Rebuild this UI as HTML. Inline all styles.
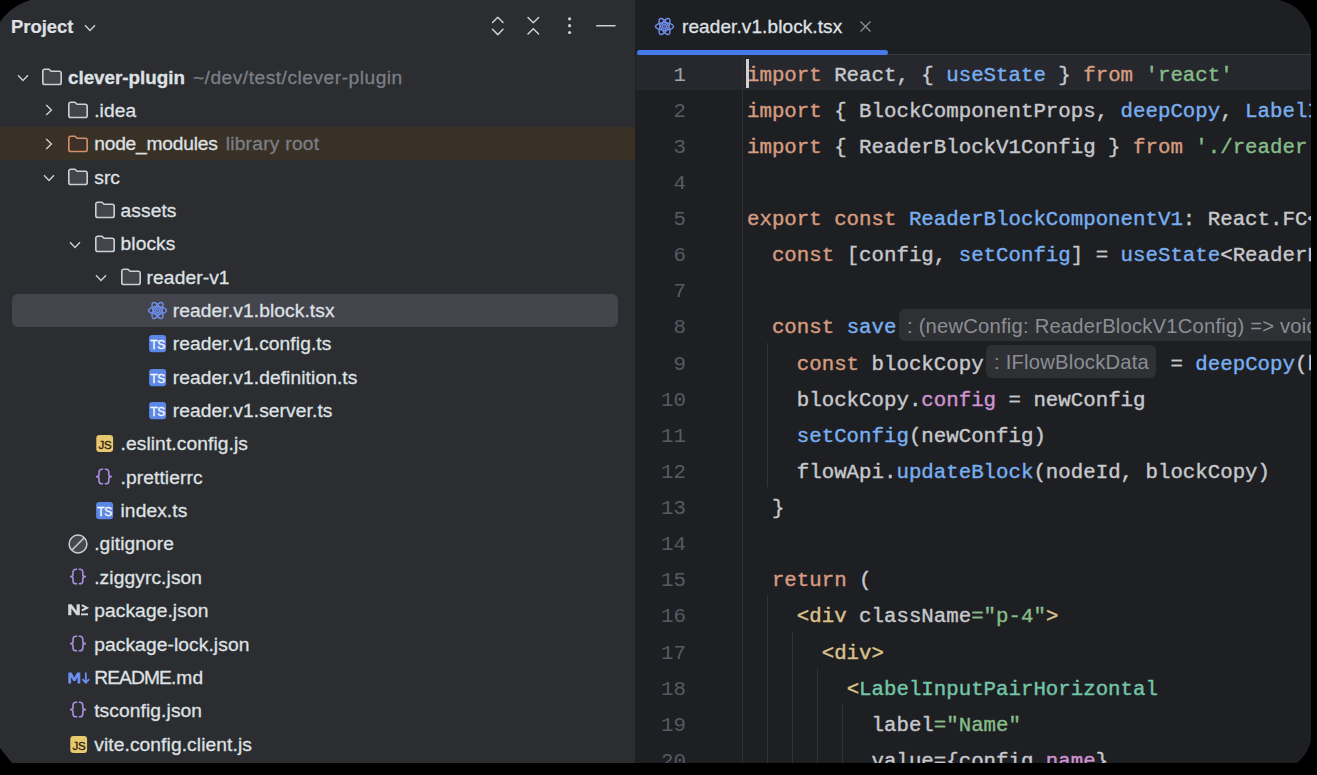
<!DOCTYPE html>
<html><head><meta charset="utf-8"><style>
*{margin:0;padding:0;box-sizing:border-box}
html,body{width:1317px;height:775px;overflow:hidden;background:#000}
#win{position:absolute;left:0;top:0;width:1311px;height:763px;overflow:hidden;background:#1E1F22}
#proj{position:absolute;left:0;top:0;width:635px;height:763px;background:#2B2D30}
#sep{position:absolute;left:635px;top:0;width:1px;height:763px;background:#1E1F22}
#ed{position:absolute;left:636px;top:0;width:675px;height:763px;background:#1E1F22;overflow:hidden}
.ic{position:absolute;line-height:0}
.ic svg{display:block}
.tn{position:absolute;font-family:"Liberation Sans",sans-serif;font-size:19.2px;line-height:33px;color:#DFE1E5;white-space:pre;letter-spacing:0.1px;-webkit-text-stroke:0.3px currentColor}
.tn.b{font-weight:700;letter-spacing:0;font-size:18.8px}
.gr{color:#7B7F86;font-weight:400;letter-spacing:0.5px;margin-left:8px;font-size:19.2px}
.hdr{position:absolute;left:11px;top:10px;font-family:"Liberation Sans",sans-serif;font-weight:700;font-size:18.4px;line-height:33px;color:#DFE1E5;-webkit-text-stroke:0.2px currentColor}
.ln{position:absolute;left:0;width:686px;text-align:right;font-family:"Liberation Mono",monospace;font-size:20.75px;line-height:36px;color:#575A61;white-space:pre}
.ln.cur{color:#A1A3AB}
.cl{position:absolute;left:747px;font-family:"Liberation Mono",monospace;font-size:20.75px;line-height:36px;color:#BCBEC4;white-space:pre;-webkit-text-stroke:0.4px currentColor}
.guide{position:absolute;width:1px;background:#313337}
.inlay{position:absolute;background:#2F3034;border-radius:6px;font-family:"Liberation Sans",sans-serif;font-size:20.2px;line-height:33px;color:#8B8E94;letter-spacing:0.22px;white-space:pre}
</style></head><body>
<div id="win">
<div id="proj">
<div class="hdr">Project</div>
<div class="ic" style="left:84px;top:24px"><svg width="12" height="8" viewBox="0 0 12 8"><path d="M1 1.2 L6 6.4 L11 1.2" fill="none" stroke="#CED0D6" stroke-width="1.4"/></svg></div>
<svg style="position:absolute;left:488px;top:14px" width="140" height="24" viewBox="0 0 140 24">
<g fill="none" stroke="#CED0D6" stroke-width="1.5" stroke-linecap="round" stroke-linejoin="round">
<path d="M4.5 8.5 L9.8 3.2 L15 8.5 M4.5 15.3 L9.8 20.6 L15 15.3"/>
<path d="M40 3.5 L45.3 8.8 L50.6 3.5 M40 20 L45.3 14.8 L50.6 20"/>
<path d="M108.7 11.7 H127"/>
</g>
<g fill="#CED0D6"><circle cx="81.6" cy="4.8" r="1.6"/><circle cx="81.6" cy="11.7" r="1.6"/><circle cx="81.6" cy="18.5" r="1.6"/></g>
</svg>
<div style="position:absolute;left:0;top:126.5px;width:635px;height:33.3px;background:#3A3126"></div>
<div style="position:absolute;left:12px;top:294px;width:606px;height:33px;background:#44454C;border-radius:6px"></div>
<div class="ic" style="left:16.5px;top:73.8px"><svg width="12" height="8" viewBox="0 0 12 8"><path d="M1 1.2 L6 6.4 L11 1.2" fill="none" stroke="#CED0D6" stroke-width="1.4"/></svg></div><div class="ic" style="left:41.0px;top:68.0px"><svg width="22" height="18" viewBox="0 0 22 18"><path d="M1.8 3.3 Q1.8 1.2 3.9 1.2 H8 L10.1 3.3 H18.1 Q20.2 3.3 20.2 5.4 V14.4 Q20.2 16.5 18.1 16.5 H3.9 Q1.8 16.5 1.8 14.4 Z" fill="#43454A" stroke="#CED0D6" stroke-width="1.6" stroke-linejoin="round"/></svg></div><div class="tn b" style="left:68.0px;top:60.5px">clever-plugin<span class="gr">~/dev/test/clever-plugin</span></div><div class="ic" style="left:44.6px;top:104.3px"><svg width="8" height="12" viewBox="0 0 8 12"><path d="M1.2 1 L6.4 6 L1.2 11" fill="none" stroke="#CED0D6" stroke-width="1.4"/></svg></div><div class="ic" style="left:67.2px;top:101.3px"><svg width="22" height="18" viewBox="0 0 22 18"><path d="M1.8 3.3 Q1.8 1.2 3.9 1.2 H8 L10.1 3.3 H18.1 Q20.2 3.3 20.2 5.4 V14.4 Q20.2 16.5 18.1 16.5 H3.9 Q1.8 16.5 1.8 14.4 Z" fill="#43454A" stroke="#CED0D6" stroke-width="1.6" stroke-linejoin="round"/></svg></div><div class="tn" style="left:94.2px;top:93.8px">.idea</div><div class="ic" style="left:44.6px;top:137.7px"><svg width="8" height="12" viewBox="0 0 8 12"><path d="M1.2 1 L6.4 6 L1.2 11" fill="none" stroke="#CED0D6" stroke-width="1.4"/></svg></div><div class="ic" style="left:67.2px;top:134.7px"><svg width="22" height="18" viewBox="0 0 22 18"><path d="M1.8 3.3 Q1.8 1.2 3.9 1.2 H8 L10.1 3.3 H18.1 Q20.2 3.3 20.2 5.4 V14.4 Q20.2 16.5 18.1 16.5 H3.9 Q1.8 16.5 1.8 14.4 Z" fill="#3E3129" stroke="#D38F6A" stroke-width="1.6" stroke-linejoin="round"/></svg></div><div class="tn" style="left:94.2px;top:127.2px"><span style="letter-spacing:-0.2px">node_modules</span><span class="gr"><span style="letter-spacing:0.25px">library root</span></span></div><div class="ic" style="left:42.7px;top:173.9px"><svg width="12" height="8" viewBox="0 0 12 8"><path d="M1 1.2 L6 6.4 L11 1.2" fill="none" stroke="#CED0D6" stroke-width="1.4"/></svg></div><div class="ic" style="left:67.2px;top:168.1px"><svg width="22" height="18" viewBox="0 0 22 18"><path d="M1.8 3.3 Q1.8 1.2 3.9 1.2 H8 L10.1 3.3 H18.1 Q20.2 3.3 20.2 5.4 V14.4 Q20.2 16.5 18.1 16.5 H3.9 Q1.8 16.5 1.8 14.4 Z" fill="#43454A" stroke="#CED0D6" stroke-width="1.6" stroke-linejoin="round"/></svg></div><div class="tn" style="left:94.2px;top:160.6px">src</div><div class="ic" style="left:93.5px;top:201.4px"><svg width="22" height="18" viewBox="0 0 22 18"><path d="M1.8 3.3 Q1.8 1.2 3.9 1.2 H8 L10.1 3.3 H18.1 Q20.2 3.3 20.2 5.4 V14.4 Q20.2 16.5 18.1 16.5 H3.9 Q1.8 16.5 1.8 14.4 Z" fill="#43454A" stroke="#CED0D6" stroke-width="1.6" stroke-linejoin="round"/></svg></div><div class="tn" style="left:120.5px;top:193.9px">assets</div><div class="ic" style="left:69.0px;top:240.6px"><svg width="12" height="8" viewBox="0 0 12 8"><path d="M1 1.2 L6 6.4 L11 1.2" fill="none" stroke="#CED0D6" stroke-width="1.4"/></svg></div><div class="ic" style="left:93.5px;top:234.8px"><svg width="22" height="18" viewBox="0 0 22 18"><path d="M1.8 3.3 Q1.8 1.2 3.9 1.2 H8 L10.1 3.3 H18.1 Q20.2 3.3 20.2 5.4 V14.4 Q20.2 16.5 18.1 16.5 H3.9 Q1.8 16.5 1.8 14.4 Z" fill="#43454A" stroke="#CED0D6" stroke-width="1.6" stroke-linejoin="round"/></svg></div><div class="tn" style="left:120.5px;top:227.2px">blocks</div><div class="ic" style="left:95.1px;top:273.9px"><svg width="12" height="8" viewBox="0 0 12 8"><path d="M1 1.2 L6 6.4 L11 1.2" fill="none" stroke="#CED0D6" stroke-width="1.4"/></svg></div><div class="ic" style="left:119.6px;top:268.1px"><svg width="22" height="18" viewBox="0 0 22 18"><path d="M1.8 3.3 Q1.8 1.2 3.9 1.2 H8 L10.1 3.3 H18.1 Q20.2 3.3 20.2 5.4 V14.4 Q20.2 16.5 18.1 16.5 H3.9 Q1.8 16.5 1.8 14.4 Z" fill="#43454A" stroke="#CED0D6" stroke-width="1.6" stroke-linejoin="round"/></svg></div><div class="tn" style="left:146.6px;top:260.6px">reader-v1</div><div class="ic" style="left:146.8px;top:301.0px"><svg width="21" height="19" viewBox="0 0 21 19"><g fill="none" stroke="#6F8EEA" stroke-width="1.45"><ellipse cx="10.5" cy="9.5" rx="9.0" ry="3.7"/><ellipse cx="10.5" cy="9.5" rx="9.0" ry="3.7" transform="rotate(60 10.5 9.5)"/><ellipse cx="10.5" cy="9.5" rx="9.0" ry="3.7" transform="rotate(120 10.5 9.5)"/><circle cx="10.5" cy="9.5" r="2.0" stroke-width="1.3"/></g><circle cx="10.5" cy="9.5" r="0.8" fill="#6F8EEA"/></svg></div><div class="tn" style="left:172.8px;top:294.0px">reader.v1.block.tsx</div><div class="ic" style="left:148.7px;top:335.3px"><svg width="18" height="18" viewBox="0 0 18 18"><rect x="0.1" y="0.1" width="17" height="17.1" rx="3.2" fill="#5C87E6"/><text x="15.9" y="13.9" text-anchor="end" font-family="Liberation Sans" font-weight="400" font-size="12" fill="#F6F8FD" stroke="#F6F8FD" stroke-width="0.35" letter-spacing="-0.3">TS</text></svg></div><div class="tn" style="left:172.8px;top:327.3px">reader.v1.config.ts</div><div class="ic" style="left:148.7px;top:368.7px"><svg width="18" height="18" viewBox="0 0 18 18"><rect x="0.1" y="0.1" width="17" height="17.1" rx="3.2" fill="#5C87E6"/><text x="15.9" y="13.9" text-anchor="end" font-family="Liberation Sans" font-weight="400" font-size="12" fill="#F6F8FD" stroke="#F6F8FD" stroke-width="0.35" letter-spacing="-0.3">TS</text></svg></div><div class="tn" style="left:172.8px;top:360.7px">reader.v1.definition.ts</div><div class="ic" style="left:148.7px;top:402.0px"><svg width="18" height="18" viewBox="0 0 18 18"><rect x="0.1" y="0.1" width="17" height="17.1" rx="3.2" fill="#5C87E6"/><text x="15.9" y="13.9" text-anchor="end" font-family="Liberation Sans" font-weight="400" font-size="12" fill="#F6F8FD" stroke="#F6F8FD" stroke-width="0.35" letter-spacing="-0.3">TS</text></svg></div><div class="tn" style="left:172.8px;top:394.0px">reader.v1.server.ts</div><div class="ic" style="left:96.1px;top:435.4px"><svg width="18" height="18" viewBox="0 0 18 18"><rect x="0.3" y="0.1" width="16.8" height="16.9" rx="3.2" fill="#E8C86E"/><text x="15.7" y="13.7" text-anchor="end" font-family="Liberation Sans" font-weight="400" font-size="11.5" fill="#2A2410" stroke="#2A2410" stroke-width="0.35" letter-spacing="-0.1">JS</text></svg></div><div class="tn" style="left:120.5px;top:427.4px">.eslint.config.js</div><div class="ic" style="left:95.4px;top:467.9px"><svg width="18" height="18" viewBox="0 0 18 18"><path d="M8.2 1.3 H7.1 Q4 1.3 4 4.3 V6.7 Q4 8.65 1.1 8.65 Q4 8.65 4 10.6 V12.9 Q4 15.8 7.1 15.8 H8.2 M9.7 1.3 H10.8 Q13.8 1.3 13.8 4.3 V6.7 Q13.8 8.65 16.9 8.65 Q13.8 8.65 13.8 10.6 V12.9 Q13.8 15.8 10.8 15.8 H9.7" fill="none" stroke="#A88EE0" stroke-width="1.6"/></svg></div><div class="tn" style="left:120.5px;top:460.7px">.prettierrc</div><div class="ic" style="left:96.4px;top:502.1px"><svg width="18" height="18" viewBox="0 0 18 18"><rect x="0.1" y="0.1" width="17" height="17.1" rx="3.2" fill="#5C87E6"/><text x="15.9" y="13.9" text-anchor="end" font-family="Liberation Sans" font-weight="400" font-size="12" fill="#F6F8FD" stroke="#F6F8FD" stroke-width="0.35" letter-spacing="-0.3">TS</text></svg></div><div class="tn" style="left:120.5px;top:494.1px">index.ts</div><div class="ic" style="left:67.7px;top:533.9px"><svg width="20" height="20" viewBox="0 0 20 20"><circle cx="10" cy="10" r="8.9" fill="#46484D" stroke="#CED0D6" stroke-width="1.5"/><path d="M3.8 16.2 L16.2 3.8" stroke="#CED0D6" stroke-width="1.5"/></svg></div><div class="tn" style="left:94.2px;top:527.4px">.gitignore</div><div class="ic" style="left:69.1px;top:568.0px"><svg width="18" height="18" viewBox="0 0 18 18"><path d="M8.2 1.3 H7.1 Q4 1.3 4 4.3 V6.7 Q4 8.65 1.1 8.65 Q4 8.65 4 10.6 V12.9 Q4 15.8 7.1 15.8 H8.2 M9.7 1.3 H10.8 Q13.8 1.3 13.8 4.3 V6.7 Q13.8 8.65 16.9 8.65 Q13.8 8.65 13.8 10.6 V12.9 Q13.8 15.8 10.8 15.8 H9.7" fill="none" stroke="#A88EE0" stroke-width="1.6"/></svg></div><div class="tn" style="left:94.2px;top:560.8px">.ziggyrc.json</div><div class="ic" style="left:68.2px;top:604.0px"><svg width="21" height="12" viewBox="0 0 21 12"><path d="M0.2 11.3 V0.2 H3.6 L8.6 7 V0.2 H11.8 V11.3 H8.5 L3.4 4.4 V11.3 Z" fill="#D5D6DA"/><path d="M13.8 1.1 L19 3.8 L13.8 6.5" fill="none" stroke="#D5D6DA" stroke-width="2"/><rect x="13" y="9.4" width="7" height="1.9" fill="#D5D6DA"/></svg></div><div class="tn" style="left:94.2px;top:594.1px">package.json</div><div class="ic" style="left:69.1px;top:634.7px"><svg width="18" height="18" viewBox="0 0 18 18"><path d="M8.2 1.3 H7.1 Q4 1.3 4 4.3 V6.7 Q4 8.65 1.1 8.65 Q4 8.65 4 10.6 V12.9 Q4 15.8 7.1 15.8 H8.2 M9.7 1.3 H10.8 Q13.8 1.3 13.8 4.3 V6.7 Q13.8 8.65 16.9 8.65 Q13.8 8.65 13.8 10.6 V12.9 Q13.8 15.8 10.8 15.8 H9.7" fill="none" stroke="#A88EE0" stroke-width="1.6"/></svg></div><div class="tn" style="left:94.2px;top:627.5px">package-lock.json</div><div class="ic" style="left:67.7px;top:671.6px"><svg width="22" height="12" viewBox="0 0 22 12"><path d="M0.3 11.6 V0.6 H3.6 L6.3 5.4 L9 0.6 H12.3 V11.6 H9.5 V5.2 L7.3 9 H5.3 L3.1 5.2 V11.6 Z" fill="#6C8EF0"/><path d="M17.8 0.6 V10.8 M14.4 7.2 L17.8 10.8 L21.2 7.2" fill="none" stroke="#6C8EF0" stroke-width="1.8"/></svg></div><div class="tn" style="left:94.2px;top:660.8px"><span style="letter-spacing:-0.9px">README</span>.md</div><div class="ic" style="left:69.1px;top:701.4px"><svg width="18" height="18" viewBox="0 0 18 18"><path d="M8.2 1.3 H7.1 Q4 1.3 4 4.3 V6.7 Q4 8.65 1.1 8.65 Q4 8.65 4 10.6 V12.9 Q4 15.8 7.1 15.8 H8.2 M9.7 1.3 H10.8 Q13.8 1.3 13.8 4.3 V6.7 Q13.8 8.65 16.9 8.65 Q13.8 8.65 13.8 10.6 V12.9 Q13.8 15.8 10.8 15.8 H9.7" fill="none" stroke="#A88EE0" stroke-width="1.6"/></svg></div><div class="tn" style="left:94.2px;top:694.1px">tsconfig.json</div><div class="ic" style="left:69.8px;top:735.5px"><svg width="18" height="18" viewBox="0 0 18 18"><rect x="0.3" y="0.1" width="16.8" height="16.9" rx="3.2" fill="#E8C86E"/><text x="15.7" y="13.7" text-anchor="end" font-family="Liberation Sans" font-weight="400" font-size="11.5" fill="#2A2410" stroke="#2A2410" stroke-width="0.35" letter-spacing="-0.1">JS</text></svg></div><div class="tn" style="left:94.2px;top:727.5px">vite.config.client.js</div>
</div>
<div id="sep"></div>
<div id="edwrap" style="position:absolute;left:0;top:0;width:1311px;height:763px">
<div style="position:absolute;left:636px;top:55px;width:675px;height:35px;background:#26282E"></div>
<div style="position:absolute;left:636px;top:54px;width:675px;height:1px;background:#393B40"></div>
<div style="position:absolute;left:742px;top:55px;width:1px;height:708px;background:#2E3034"></div>
<div class="guide" style="left:766.8px;top:343px;height:144px"></div><div class="guide" style="left:766.8px;top:596px;height:217px"></div><div class="guide" style="left:791.8px;top:632px;height:181px"></div><div class="guide" style="left:816.8px;top:668px;height:144px"></div><div class="guide" style="left:841.8px;top:704px;height:108px"></div>
<div style="position:absolute;left:637px;top:49.5px;width:251px;height:5.3px;background:#4679EA;border-radius:3px"></div>
<div class="ic" style="left:653.5px;top:16.5px"><svg width="21" height="19" viewBox="0 0 21 19"><g fill="none" stroke="#6F8EEA" stroke-width="1.45"><ellipse cx="10.5" cy="9.5" rx="9.0" ry="3.7"/><ellipse cx="10.5" cy="9.5" rx="9.0" ry="3.7" transform="rotate(60 10.5 9.5)"/><ellipse cx="10.5" cy="9.5" rx="9.0" ry="3.7" transform="rotate(120 10.5 9.5)"/><circle cx="10.5" cy="9.5" r="2.0" stroke-width="1.3"/></g><circle cx="10.5" cy="9.5" r="0.8" fill="#6F8EEA"/></svg></div>
<div class="tn" style="left:682px;top:10px;font-size:19px">reader.v1.block.tsx</div>
<svg style="position:absolute;left:859px;top:20px" width="13" height="13" viewBox="0 0 13 13"><path d="M1.5 1.5 L11.5 11.5 M11.5 1.5 L1.5 11.5" stroke="#8C8F94" stroke-width="1.3"/></svg>
<div class="ln cur" style="top:57.6px">1</div><div class="cl" style="top:57.6px"><span style="color:#D69C80">import</span><span style="color:#C6C8CD"> React, { </span><span style="color:#78AEF0">useState</span><span style="color:#C6C8CD"> } </span><span style="color:#D69C80">from</span> <span style="color:#86BC89">'react'</span></div><div class="ln" style="top:93.7px">2</div><div class="cl" style="top:93.7px"><span style="color:#D69C80">import</span><span style="color:#C6C8CD"> { BlockComponentProps, </span><span style="color:#78AEF0">deepCopy</span><span style="color:#C6C8CD">, </span><span style="color:#78AEF0">LabelInputPairHorizontal</span></div><div class="ln" style="top:129.8px">3</div><div class="cl" style="top:129.8px"><span style="color:#D69C80">import</span><span style="color:#C6C8CD"> { ReaderBlockV1Config } </span><span style="color:#D69C80">from</span> <span style="color:#86BC89">'./reader.v1.config'</span></div><div class="ln" style="top:166.0px">4</div><div class="ln" style="top:202.1px">5</div><div class="cl" style="top:202.1px"><span style="color:#D69C80">export const </span><span style="color:#78AEF0">ReaderBlockComponentV1</span><span style="color:#C6C8CD">: React.FC&lt;BlockComponentProps&gt;</span></div><div class="ln" style="top:238.2px">6</div><div class="cl" style="top:238.2px"><span style="color:#C6C8CD">  </span><span style="color:#D69C80">const </span><span style="color:#C6C8CD">[config, </span><span style="color:#78AEF0">setConfig</span><span style="color:#C6C8CD">] = </span><span style="color:#78AEF0">useState</span><span style="color:#C6C8CD">&lt;ReaderBlockV1Config&gt;</span></div><div class="ln" style="top:274.3px">7</div><div class="ln" style="top:310.4px">8</div><div class="cl" style="top:310.4px"><span style="color:#C6C8CD">  </span><span style="color:#D69C80">const </span><span style="color:#78AEF0">save</span></div><div class="ln" style="top:346.6px">9</div><div class="cl" style="top:346.6px"><span style="color:#C6C8CD">    </span><span style="color:#D69C80">const </span><span style="color:#C6C8CD">blockCopy</span></div><div class="ln" style="top:382.7px">10</div><div class="cl" style="top:382.7px"><span style="color:#C6C8CD">    blockCopy.</span><span style="color:#CF94D2">config</span><span style="color:#C6C8CD"> = newConfig</span></div><div class="ln" style="top:418.8px">11</div><div class="cl" style="top:418.8px"><span style="color:#C6C8CD">    </span><span style="color:#78AEF0">setConfig</span><span style="color:#C6C8CD">(newConfig)</span></div><div class="ln" style="top:454.9px">12</div><div class="cl" style="top:454.9px"><span style="color:#C6C8CD">    flowApi.</span><span style="color:#78AEF0">updateBlock</span><span style="color:#C6C8CD">(nodeId, blockCopy)</span></div><div class="ln" style="top:491.0px">13</div><div class="cl" style="top:491.0px"><span style="color:#C6C8CD">  }</span></div><div class="ln" style="top:527.2px">14</div><div class="ln" style="top:563.3px">15</div><div class="cl" style="top:563.3px"><span style="color:#C6C8CD">  </span><span style="color:#D69C80">return</span><span style="color:#C6C8CD"> (</span></div><div class="ln" style="top:599.4px">16</div><div class="cl" style="top:599.4px"><span style="color:#C6C8CD">    </span><span style="color:#DBC28C">&lt;div </span><span style="color:#C6C8CD">className</span><span style="color:#86BC89">="p-4"</span><span style="color:#DBC28C">&gt;</span></div><div class="ln" style="top:635.5px">17</div><div class="cl" style="top:635.5px"><span style="color:#C6C8CD">      </span><span style="color:#DBC28C">&lt;div&gt;</span></div><div class="ln" style="top:671.6px">18</div><div class="cl" style="top:671.6px"><span style="color:#C6C8CD">        </span><span style="color:#DBC28C">&lt;</span><span style="color:#72C6A8">LabelInputPairHorizontal</span></div><div class="ln" style="top:707.8px">19</div><div class="cl" style="top:707.8px"><span style="color:#C6C8CD">          label</span><span style="color:#86BC89">="Name"</span></div><div class="ln" style="top:743.9px">20</div><div class="cl" style="top:743.9px"><span style="color:#C6C8CD">          value={config.</span><span style="color:#CF94D2">name</span><span style="color:#C6C8CD">}</span></div><div class="cl" style="left:1158px;top:346.6px"><span style="color:#C6C8CD"> = </span><span style="color:#78AEF0">deepCopy</span><span style="color:#C6C8CD">(blockData)</span></div>
<div class="inlay" style="left:899px;top:309px;width:460px;height:32px;padding-left:8px;padding-top:0.8px">: (newConfig: ReaderBlockV1Config) =&gt; void</div>
<div class="inlay" style="left:986px;top:345px;width:169.5px;height:33px;padding-left:8px;padding-top:0.8px">: IFlowBlockData</div>
<div style="position:absolute;left:746px;top:59px;width:3px;height:29px;background:#CED0D6"></div>
</div>
</div>
<svg style="position:absolute;left:0;top:0" width="1317" height="775" viewBox="0 0 1317 775">
<path d="M0 0 H31 C20 3 8 10 0 22 Z" fill="#000"/>
<path d="M1279 0 H1311 V30 C1305 12 1293 3 1279 0 Z" fill="#000"/>
<path d="M0 748 L12 763 H0 Z" fill="#000"/>
<path d="M1311 740 V763 H1297 C1304 757 1309 750 1311 740 Z" fill="#000"/>
</svg>
</body></html>
